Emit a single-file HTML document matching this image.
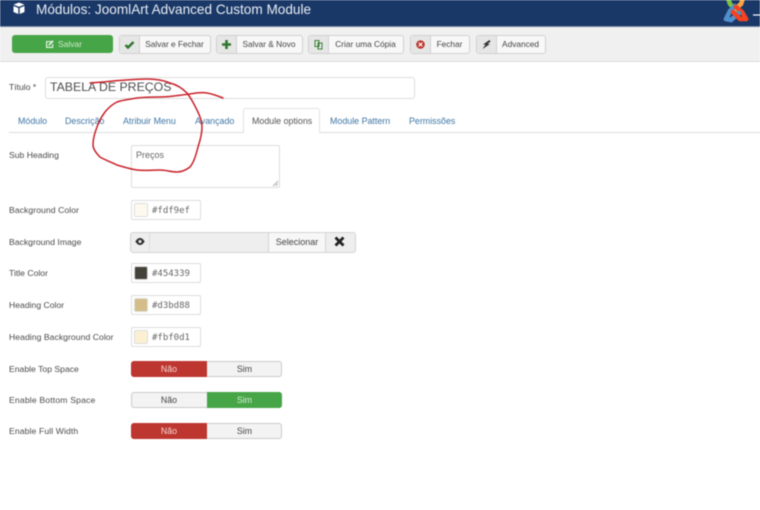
<!DOCTYPE html>
<html><head><meta charset="utf-8"><style>
html,body{margin:0;padding:0}
body{width:760px;height:510px;overflow:hidden;background:#fff;position:relative;font-family:"Liberation Sans",sans-serif;font-size:9px;color:#555}
#w{position:absolute;left:0;top:0;width:760px;height:510px;filter:blur(.45px);overflow:hidden}
.a{position:absolute}
.hdr{left:0;top:0;width:760px;height:26px;background:#1a3867;border-bottom:1px solid #6f8098}
.bar{left:0;top:27px;width:760px;height:34px;background:#f0f0f0;border-bottom:1px solid #ddd}
.btn{position:absolute;top:35px;height:17px;background:#f8f8f8;border:1px solid #d0d0d0;border-radius:3px;line-height:17px;font-size:8.3px;color:#444;text-align:center}
.btn i{position:absolute;left:0;top:0;width:19px;height:17px;background:#e6e6e6;border-right:1px solid #d0d0d0;border-radius:3px 0 0 3px;font-style:normal}
.btn i svg{position:absolute;left:4px;top:3px}
.btn span{position:absolute;left:19px;right:0;top:0;white-space:nowrap}
.tab{position:absolute;top:115px;font-size:8.9px;color:#3f76a5;white-space:nowrap;line-height:12px}
.lbl{position:absolute;left:9px;font-size:8.65px;color:#4a4a4a;white-space:nowrap;line-height:12px}
.clr{position:absolute;left:131px;width:68px;height:18px;border:1px solid #ddd;border-radius:2px;background:#fff}
.clr b{position:absolute;left:2px;top:2px;width:14px;height:14px;border:1px solid #ddd;border-radius:2px;box-sizing:border-box}
.clr span{position:absolute;left:20px;top:4px;font-family:"DejaVu Sans Mono",monospace;font-size:9px;color:#666;line-height:12px}
.tg{position:absolute;left:131px;width:151px;height:16px;border-radius:3px;overflow:hidden;font-size:8.8px;line-height:16px;text-align:center;background:#f3f3f3;box-shadow:inset 0 0 0 1px #ccc;color:#444}
.tg div{position:absolute;top:0;height:16px}
.l{left:0;width:76px}.r{left:76px;width:75px}
.red{background:#bd362f;color:#f5d8d6}.grn{background:#46a546;color:#d8efd8}
</style></head><body><div id="w">
<div class="a hdr"></div>
<svg class="a" style="left:13px;top:2px" width="12" height="13" viewBox="0 0 12 13"><path d="M6 0.5 11.5 2.6 6 4.8 .5 2.6Z M.5 4 5.3 6v6L.5 10Z M11.5 4 6.700 6v6l4.800-2Z" fill="#fff"/></svg>
<div class="a" style="left:36px;top:1px;font-size:13.6px;line-height:18px;color:#e8edf3;white-space:nowrap">Módulos: JoomlArt Advanced Custom Module</div>
<svg class="a" style="left:722px;top:0" width="38" height="24" viewBox="0 0 38 24">
<g fill="none" stroke-width="4.600" stroke-linecap="round">
<path d="M6 -2 L8 4 L15 11" stroke="#7ac143"/>
<path d="M21 -2 L19 4 L13 9" stroke="#f9a541"/>
<path d="M4 19 L8 11 L13 6" stroke="#5091cd"/>
<path d="M24 19 L20 12 L14 7" stroke="#f44321"/>
<path d="M4 19 L9 20 L17 13" stroke="#5091cd"/>
<path d="M24 19 L18 19 L11 12" stroke="#f44321"/>
</g>
<path d="M31 15h7" stroke="#fff" stroke-width="1.200"/>
</svg>
<div class="a bar"></div>
<div class="a" style="left:12px;top:35px;width:101px;height:18px;background:#46a546;border-radius:3px;color:#cfe9cf;font-size:8.5px;line-height:18px"><svg class="a" style="left:34px;top:5px" width="8" height="8" viewBox="0 0 8 8"><path d="M0 1h6v1.200L1.200 2v4.800h4.800V4.500L7.200 3.500V8H0Z" fill="#e4f3e4"/><path d="M2.500 4.200 6.500.3 7.700 1.500 3.700 5.400 2.200 5.700Z" fill="#e4f3e4"/></svg><span class="a" style="left:46px">Salvar</span></div>
<div class="btn" style="left:119px;width:90px"><i><svg width="11" height="11" viewBox="0 0 11 11"><path d="M1.500 6 4 8.500 9.500 3" fill="none" stroke="#2f762f" stroke-width="2.400"/></svg></i><span>Salvar e Fechar</span></div>
<div class="btn" style="left:216px;width:85px"><i><svg width="11" height="11" viewBox="0 0 11 11"><path d="M5.500 1v9M1 5.500h9" stroke="#2f762f" stroke-width="2.600"/></svg></i><span>Salvar &amp; Novo</span></div>
<div class="btn" style="left:308px;width:94px"><i><svg width="11" height="11" viewBox="0 0 11 11"><path d="M2 1.500h4v6H2Z M5 4h4v6H5Z" fill="none" stroke="#378137" stroke-width="1"/></svg></i><span>Criar uma Cópia</span></div>
<div class="btn" style="left:410px;width:58px"><i><svg width="11" height="11" viewBox="0 0 11 11"><circle cx="5.500" cy="5.500" r="4.300" fill="#bd362f"/><path d="M3.700 3.700l3.600 3.600M7.300 3.700l-3.600 3.600" stroke="#fff" stroke-width="1.100"/></svg></i><span>Fechar</span></div>
<div class="btn" style="left:476px;width:68px"><i><svg width="11" height="11" viewBox="0 0 11 11"><path d="M8.500 1 2 5.500h2.500L1.500 10 9 5H6.500L9.500 2.500Z" fill="#333"/></svg></i><span>Advanced</span></div>

<div class="a" style="left:9px;top:81px;font-size:8.6px;line-height:12px;color:#444">Título *</div>
<div class="a" style="left:45px;top:77px;width:368px;height:20px;border:1px solid #ddd;border-radius:3px;background:#fff"></div>
<div class="a" style="left:50px;top:80px;font-size:12.3px;line-height:15px;color:#4d4d4d;white-space:nowrap">TABELA DE PREÇOS</div>

<div class="a" style="left:9px;top:132px;width:751px;height:1px;background:#ddd"></div>
<div class="a" style="left:243px;top:108px;width:77px;height:25px;background:#fff;border:1px solid #e2e2e2;border-bottom:none;border-radius:3px 3px 0 0;box-sizing:border-box"></div>
<div class="tab" style="left:18px">Módulo</div>
<div class="tab" style="left:65px">Descrição</div>
<div class="tab" style="left:123px">Atribuir Menu</div>
<div class="tab" style="left:195px">Avançado</div>
<div class="tab" style="left:252px;color:#555">Module options</div>
<div class="tab" style="left:330px">Module Pattern</div>
<div class="tab" style="left:409px">Permissões</div>

<div class="lbl" style="top:149px">Sub Heading</div>
<div class="a" style="left:131px;top:145px;width:147px;height:41px;border:1px solid #ddd;border-radius:2px;background:#fff"></div>
<div class="a" style="left:136px;top:149px;font-size:9px;line-height:12px;color:#666">Preços</div>
<svg class="a" style="left:272px;top:180px" width="7" height="7" viewBox="0 0 7 7"><path d="M6 1 1 6M6 3.500 3.500 6" stroke="#999" stroke-width=".8"/></svg>

<div class="lbl" style="top:204px;letter-spacing:.06px">Background Color</div>
<div class="clr" style="top:200px"><b style="background:#fdf9ef"></b><span>#fdf9ef</span></div>

<div class="lbl" style="top:236px">Background Image</div>
<div class="a" style="left:130px;top:232px;width:224px;height:19px;background:#eee;border:1px solid #d4d4d4;border-radius:3px"></div>
<div class="a" style="left:149px;top:233px;width:1px;height:18px;background:#ddd"></div>
<svg class="a" style="left:135px;top:238px" width="10" height="7" viewBox="0 0 10 7"><path d="M.3 3.500C2 .8 3.500 0 5 0s3 .8 4.700 3.500C8 6.200 6.500 7 5 7S2 6.200.3 3.500Z" fill="#333"/><circle cx="5" cy="3.500" r="1.500" fill="#eee"/></svg>
<div class="a" style="left:268px;top:233px;width:58px;height:19px;background:#f7f7f7;border-left:1px solid #d4d4d4;border-right:1px solid #d4d4d4;text-align:center;line-height:18px;font-size:9px;color:#444;box-sizing:border-box">Selecionar</div>
<svg class="a" style="left:334px;top:236px" width="11" height="11" viewBox="0 0 11 11"><path d="M1.500 1.500l8 8M9.500 1.500l-8 8" stroke="#222" stroke-width="2.800"/></svg>

<div class="lbl" style="top:267px">Title Color</div>
<div class="clr" style="top:263px"><b style="background:#454339"></b><span>#454339</span></div>
<div class="lbl" style="top:299px">Heading Color</div>
<div class="clr" style="top:295px"><b style="background:#d3bd88"></b><span>#d3bd88</span></div>
<div class="lbl" style="top:331px;letter-spacing:.04px">Heading Background Color</div>
<div class="clr" style="top:327px"><b style="background:#fbf0d1"></b><span>#fbf0d1</span></div>

<div class="lbl" style="top:363px">Enable Top Space</div>
<div class="tg" style="top:361px"><div class="l red">Não</div><div class="r">Sim</div></div>
<div class="lbl" style="top:394px;letter-spacing:.16px">Enable Bottom Space</div>
<div class="tg" style="top:392px"><div class="l">Não</div><div class="r grn">Sim</div></div>
<div class="lbl" style="top:425px;letter-spacing:.1px">Enable Full Width</div>
<div class="tg" style="top:423px"><div class="l red">Não</div><div class="r">Sim</div></div>

<svg class="a" style="left:0;top:0" width="760" height="510" viewBox="0 0 760 510"><path d="M90 83C100 82 106 82 113 81C125 80 136 79 147 79C155 79 163 80 170 83C178 85 183 89 187 93C191 98 194 104 197 110C200 116 202 121 202 127C202 134 200 141 198 147C196 155 194 162 190 167C186 170 182 172 177 172C171 172 166 170 160 170C152 170 145 171 137 170C130 169 124 167 117 165C111 162 105 160 100 157C96 153 93 149 93 145C93 138 95 132 97 127C99 121 102 116 105 112C109 107 113 104 117 102C123 100 130 99 137 98C145 97 152 97 160 97C170 97 180 95 190 94C196 93 201 92 207 93C213 94 218 96 223 98" fill="none" stroke="#c8222a" stroke-width="1.500" stroke-linecap="round"/></svg>
</div></body></html>
